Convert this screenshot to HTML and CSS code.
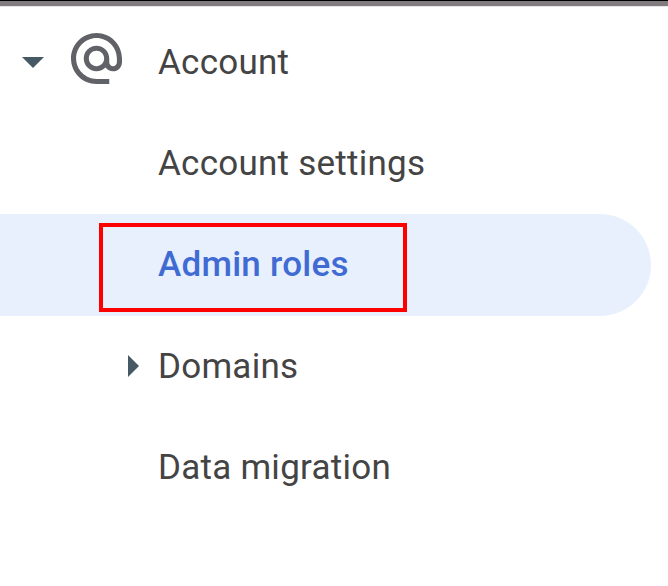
FILE: index.html
```html
<!DOCTYPE html>
<html lang="en">
<head>
<meta charset="utf-8">
<title>Account</title>
<link rel="stylesheet" href="styles.css">
</head>
<body>
<div class="topbar"></div>
<nav class="nav">
  <a class="item item-parent">
    <svg class="caret-down" viewBox="0 0 22 11"><path d="M0 0h22L11 11z"/></svg>
    <svg class="at" viewBox="2 2 20 20"><path d="M12 2C6.48 2 2 6.48 2 12s4.48 10 10 10h5v-2h-5c-4.34 0-8-3.66-8-8s3.66-8 8-8 8 3.66 8 8v1.43c0 .79-.71 1.57-1.5 1.57s-1.500-.78-1.500-1.570V12c0-2.760-2.240-5-5-5s-5 2.240-5 5 2.240 5 5 5c1.380 0 2.640-.56 3.540-1.470.65.89 1.770 1.470 2.960 1.470 1.970 0 3.500-1.600 3.500-3.570V12c0-5.520-4.480-10-10-10zm0 13c-1.660 0-3-1.340-3-3s1.340-3 3-3 3 1.340 3 3-1.340 3-3 3z"/></svg>
    <span class="label">Account</span>
  </a>
  <a class="item"><span class="label">Account settings</span></a>
  <a class="item item-active"><span class="label">Admin roles</span><i class="highlight"></i></a>
  <a class="item item-branch">
    <svg class="caret-right" viewBox="0 0 11 22"><path d="M0 0v22L11 11z"/></svg>
    <span class="label">Domains</span>
  </a>
  <a class="item"><span class="label">Data migration</span></a>
</nav>
</body>
</html>
```

FILE: styles.css
```css
body {
  margin: 0;
  background: #fff;
  color: #444;
  font-family: Roboto, sans-serif;
  font-size: 35px;
  overflow: hidden;
}
.topbar {
  height: 5px;
  border-top: 1px solid #000;
  border-bottom: 1px solid #e6e6e6;
  background: #807c80;
}
.nav {
  width: 651px;
  padding-top: 4px;
}
.item {
  display: flex;
  align-items: center;
  position: relative;
  box-sizing: border-box;
  height: 101.5px;
  padding-left: 158px;
  letter-spacing: 0.25px;
  white-space: nowrap;
}
.item svg { fill: #455a64; flex: none; }
.item-parent { padding: 1px 0 0 22px; }
.caret-down { width: 22px; height: 11px; margin: 1px 27px 0 0; }
.item .at { width: 51px; height: 51px; margin: 0 36px 8px 0; fill: #616267; }
.item-active {
  background: #e8f0fe;
  border-radius: 0 51px 51px 0;
  color: #3f6bd3;
  font-weight: 500;
}
.highlight {
  position: absolute;
  left: 99px;
  top: 9px;
  box-sizing: border-box;
  width: 308px;
  height: 89px;
  border: 4px solid #f00;
}
.item-branch { padding-left: 128px; }
.caret-right { width: 11px; height: 22px; margin-right: 19px; }
```
